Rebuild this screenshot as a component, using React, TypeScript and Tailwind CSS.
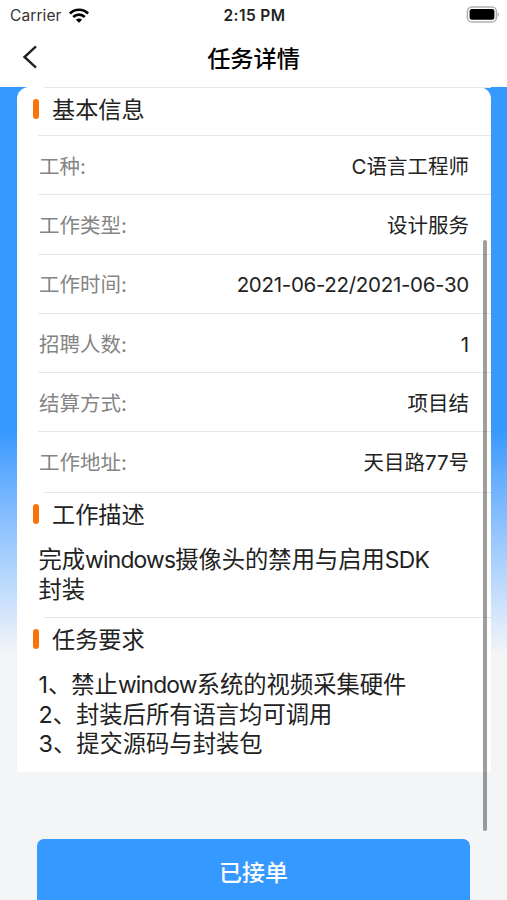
const details = [
  { label: '工种:', value: 'C语言工程师' },
  { label: '工作类型:', value: '设计服务' },
  { label: '工作时间:', value: '2021-06-22/2021-06-30' },
  { label: '招聘人数:', value: '1' },
  { label: '结算方式:', value: '项目结' },
  { label: '工作地址:', value: '天目路77号' },
];

function StatusBar() {
  return (
    <div className="grid h-[30px] shrink-0 grid-cols-3 items-center pl-[10px] pr-2">
      <div className="flex items-center gap-[7px] pt-px">
        <span className="text-[15.5px] tracking-[0.1px] text-[#333]">Carrier</span>
        <svg className="-mt-px" width="20" height="15" viewBox="0 0 20 15" fill="none" stroke="#000" strokeWidth="2.7">
          <path d="M0.9 5.5C6 0.5 14 0.5 19.1 5.5" />
          <path d="M4.2 9C7.4 5.9 12.6 5.9 15.8 9" />
          <path d="M10 14.7L6.9 11.7C8.6 10.1 11.4 10.1 13.1 11.7Z" fill="#000" stroke="none" />
        </svg>
      </div>
      <span className="pt-px text-center text-[15.5px] font-semibold tracking-[0.4px]">2:15 PM</span>
      <svg className="-mt-[2px] justify-self-end" width="33" height="17" viewBox="0 0 33 17">
        <rect x="1.4" y="0.9" width="29" height="15" rx="4.5" fill="none" stroke="#b0b0b0" strokeWidth="1.5" />
        <rect x="3.6" y="3" width="24.8" height="10.8" rx="2.3" fill="#000" />
        <path d="M31.6 6V11Q33 10 33 8.5T31.6 6Z" fill="#b0b0b0" />
      </svg>
    </div>
  );
}

function Header() {
  return (
    <div className="grid h-[57px] shrink-0 grid-cols-3 items-center">
      <svg className="-mt-[3px] ml-[22px]" width="16" height="26" viewBox="0 0 16 26" fill="none" stroke="#222" strokeWidth="2.4">
        <path d="M14 2.3L2.5 13L14 23.7" />
      </svg>
      <h1 className="text-center text-[23.2px] font-medium leading-7 text-black">任务详情</h1>
    </div>
  );
}

function SectionTitle({ children }: { children: string }) {
  return (
    <div>
      <div className="ml-[27px] h-px bg-[#e6e6e6]" />
      <div className="flex h-[46px] items-start gap-[13px] pl-4">
        <span className="mt-[11px] h-5 w-[6px] rounded-[3px] bg-[#f8740b]" />
        <h2 className="mt-2 text-[23.2px] leading-7">{children}</h2>
      </div>
    </div>
  );
}

function Latin({ children }: { children: string }) {
  return <span className="text-[22.8px] tracking-[-0.78px]">{children}</span>;
}

export default function App() {
  return (
    <div className="relative flex h-[900px] w-[507px] flex-col overflow-hidden bg-white font-['Inter','Noto_Sans_CJK_SC',sans-serif] text-[#222]">
      <StatusBar />
      <Header />
      <main className="flex-1 bg-linear-to-b from-[#3699ff] from-[345px] to-[#f3f5f7] to-[567px] px-[17px]">
        <section className="h-[685px] w-[474px] rounded-t-[12px] bg-white">
          <SectionTitle>基本信息</SectionTitle>
          <div className="h-[358px] pt-px">
            {details.map((item) => (
              <div
                key={item.label}
                className="ml-[21px] flex h-[59.3px] items-center justify-between border-t border-[#e6e6e6] pl-px pr-[22px] pt-[3px] text-[20.5px] leading-6"
              >
                <span className="text-[#858585]">{item.label}</span>
                <span className={item.value.includes('-') ? 'tracking-[-0.3px]' : ''}>{item.value}</span>
              </div>
            ))}
          </div>
          <SectionTitle>工作描述</SectionTitle>
          <p className="h-[78px] whitespace-nowrap pl-[21.5px] pt-[6px] text-[23.3px] leading-[29.7px]">
            完成<Latin>windows</Latin>摄像头的禁用与启用<Latin>SDK</Latin>
            <br />
            封装
          </p>
          <SectionTitle>任务要求</SectionTitle>
          <div className="whitespace-nowrap pl-[21.5px] pt-[6px] text-[23.3px] leading-[29.7px]">
            <p>
              1、禁止<Latin>window</Latin>系统的视频采集硬件
            </p>
            <p>2、封装后所有语言均可调用</p>
            <p>3、提交源码与封装包</p>
          </div>
        </section>
        <button className="ml-5 mt-[67px] h-[68px] w-[433px] rounded-t-[7px] bg-[#3699ff] text-[23px] font-medium text-white">
          已接单
        </button>
      </main>
      <div className="absolute left-[483px] top-[240px] h-[591px] w-1 rounded-full bg-black/38" />
    </div>
  );
}
